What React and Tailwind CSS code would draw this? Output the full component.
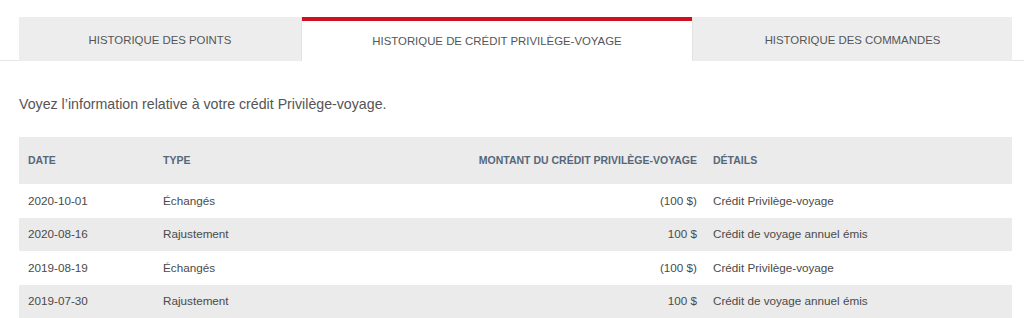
const rows = [
  { date: "2020-10-01", type: "Échangés", amount: "(100 $)", details: "Crédit Privilège-voyage" },
  { date: "2020-08-16", type: "Rajustement", amount: "100 $", details: "Crédit de voyage annuel émis" },
  { date: "2019-08-19", type: "Échangés", amount: "(100 $)", details: "Crédit Privilège-voyage" },
  { date: "2019-07-30", type: "Rajustement", amount: "100 $", details: "Crédit de voyage annuel émis" },
];

const App = () => {
  return (
    <div className="w-[1024px] h-[318px] overflow-hidden bg-white font-['Liberation_Sans',Arial,sans-serif]">
      <div className="pt-[17px] flex">
        <div className="w-[19px] border-b border-[#e6e6e6]"></div>
        <div className="w-[283px] h-[44px] bg-[#ededed] border-r border-[#e2e2e2] flex items-center justify-center pt-[4px] text-[11.4px] text-[#555]">
          HISTORIQUE DES POINTS
        </div>
        <div className="w-[390px] h-[44px] bg-white border-t-[4px] border-[#d0101e] flex items-center justify-center pt-[1px] text-[11.4px] text-[#555]">
          HISTORIQUE DE CRÉDIT PRIVILÈGE-VOYAGE
        </div>
        <div className="w-[320px] h-[44px] bg-[#ededed] border-l border-[#e2e2e2] flex items-center justify-center pt-[4px] text-[11.4px] text-[#555]">
          HISTORIQUE DES COMMANDES
        </div>
        <div className="flex-1 border-b border-[#e6e6e6]"></div>
      </div>

      <div className="pl-[19px] pr-[12px]">
        <p className="mt-[34px] text-[14.2px] text-[#555] leading-[18px]">
          Voyez l’information relative à votre crédit Privilège-voyage.
        </p>

        <div className="mt-[24px]">
          <div className="h-[47px] bg-[#ebebeb] flex items-center text-[10.5px] font-bold text-[#56677a] uppercase">
            <div className="w-[144px] pl-[9px]">Date</div>
            <div className="w-[134px]">Type</div>
            <div className="w-[400px] text-right">Montant du crédit Privilège-voyage</div>
            <div className="pl-[16px]">Détails</div>
          </div>
          {rows.map((r, i) => (
            <div
              key={i}
              className={`h-[33.5px] flex items-center text-[11.7px] text-[#4a4a4a] ${i % 2 === 1 ? "bg-[#ebebeb]" : "bg-white"}`}
            >
              <div className="w-[144px] pl-[9px]">{r.date}</div>
              <div className="w-[134px]">{r.type}</div>
              <div className="w-[400px] text-right">{r.amount}</div>
              <div className="pl-[16px]">{r.details}</div>
            </div>
          ))}
        </div>
      </div>
    </div>
  );
};

export default App;
